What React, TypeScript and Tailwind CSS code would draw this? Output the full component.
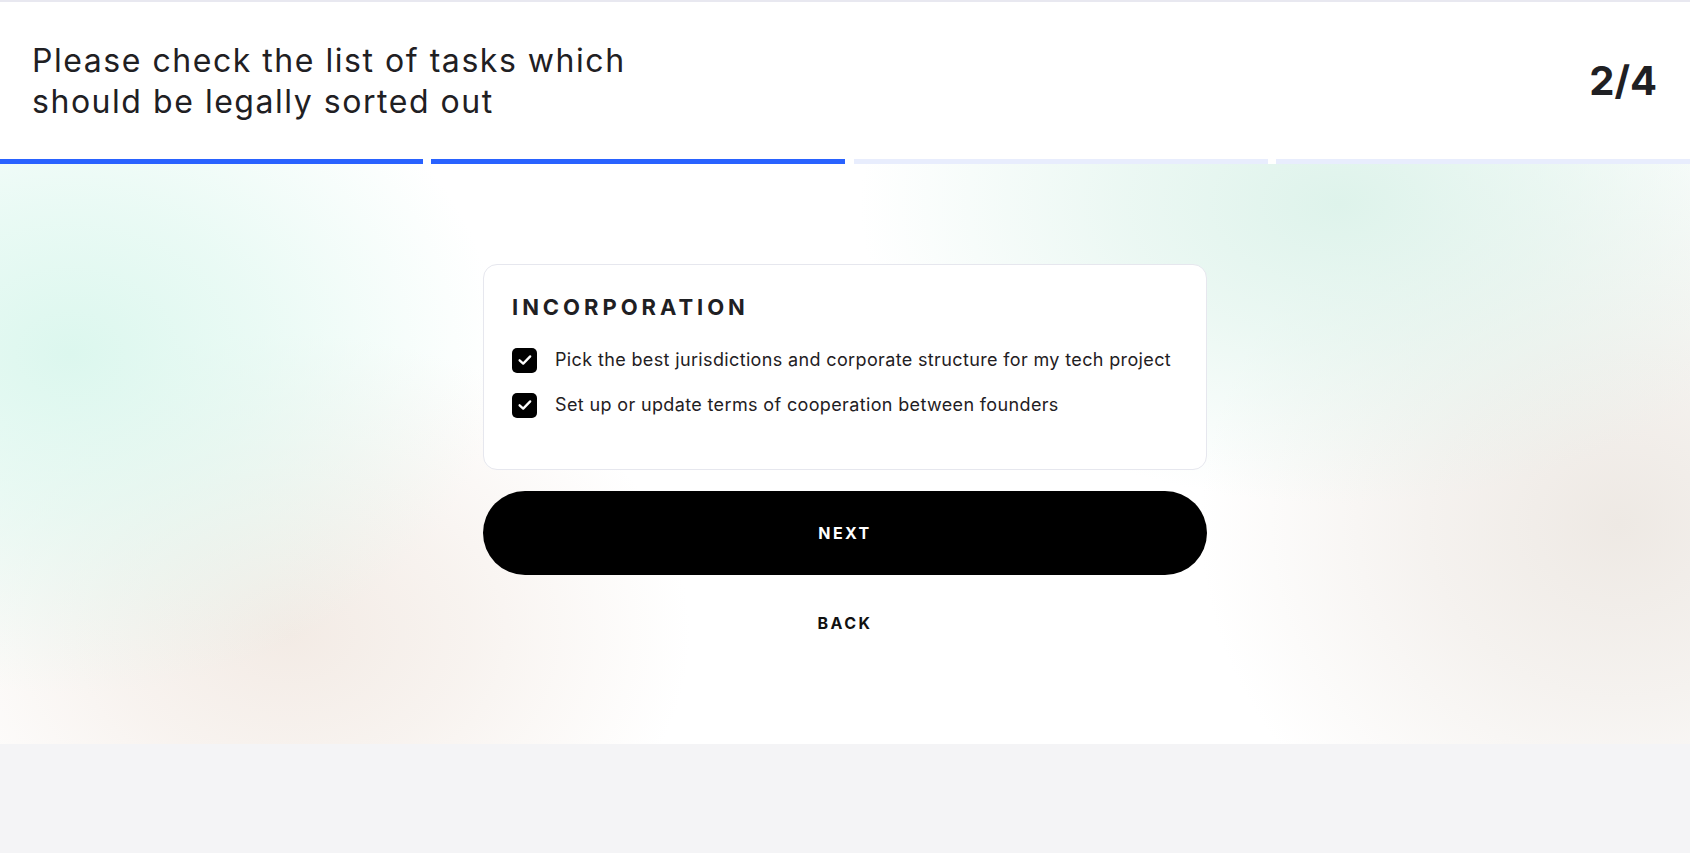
import React from "react";

function Check() {
  return (
    <span className="flex h-[25px] w-[25px] shrink-0 items-center justify-center rounded-[5px] bg-black">
      <svg width="16" height="16" viewBox="0 0 16 16" fill="none">
        <path d="M2.6 8.3 L6.2 11.6 L13.2 4.4" stroke="white" strokeWidth="2.3" strokeLinecap="round" strokeLinejoin="round" />
      </svg>
    </span>
  );
}

export default function App() {
  const items = [
    "Pick the best jurisdictions and corporate structure for my tech project",
    "Set up or update terms of cooperation between founders",
  ];
  return (
    <div className="min-h-[853px] bg-[#f4f4f6] font-['Inter',sans-serif] text-[#1f2023]">
      <div className="bg-white">
        <div className="h-[2px] bg-[#e8e8f0]" />
        <header className="flex h-[157px] items-center justify-between pl-8 pr-[33px]">
          <h1 className="max-w-[700px] text-[32px] leading-[41px] font-normal tracking-[0.048em] text-[#1f2023]">
            Please check the list of tasks which
            <br />
            should be legally sorted out
          </h1>
          <div className="text-[40px] leading-[48px] font-bold text-[#1f2023]">2/4</div>
        </header>
        <div className="grid h-[5px] grid-cols-4">
          <div>
            <div className="h-full bg-[#2962ff]" />
          </div>
          <div className="pl-2">
            <div className="h-full bg-[#2962ff]" />
          </div>
          <div className="pl-[9px]">
            <div className="h-full bg-[#e8edfd]" />
          </div>
          <div className="pl-2">
            <div className="h-full bg-[#e8edfd]" />
          </div>
        </div>
        <main className="flex h-[580px] flex-col items-center pt-[100px] bg-[image:radial-gradient(ellipse_430px_340px_at_70px_190px,rgba(220,247,238,1)_0%,rgba(220,247,238,0.6)_45%,rgba(220,247,238,0)_100%),radial-gradient(ellipse_400px_300px_at_290px_470px,rgba(243,235,229,1)_0%,rgba(243,235,229,0.6)_45%,rgba(243,235,229,0)_100%),radial-gradient(ellipse_480px_300px_at_1340px_40px,rgba(222,243,235,1)_0%,rgba(222,243,235,0.6)_45%,rgba(222,243,235,0)_100%),radial-gradient(ellipse_420px_380px_at_1620px_360px,rgba(238,233,228,1)_0%,rgba(238,233,228,0.6)_45%,rgba(238,233,228,0)_100%)]">
          <section className="w-[724px] rounded-[14px] border border-[#e6e7ee] bg-white px-7 pt-7 pb-[50px]">
            <h2 className="text-[22px] leading-[28px] font-bold tracking-[0.18em] text-[#1f2023]">
              INCORPORATION
            </h2>
            <ul className="mt-[25px] flex flex-col gap-[17px]">
              {items.map((t) => (
                <li key={t} className="flex items-center gap-[18px]">
                  <Check />
                  <span className="text-[18px] leading-[28px] tracking-[0.02em] text-[#1f2023]">{t}</span>
                </li>
              ))}
            </ul>
          </section>
          <button className="mt-[21px] flex h-[84px] w-[724px] items-center justify-center rounded-full bg-black text-[16px] font-bold tracking-[0.15em] text-white">
            NEXT
          </button>
          <button className="mt-[36px] text-[16px] leading-[24px] font-bold tracking-[0.15em] text-[#111]">
            BACK
          </button>
        </main>
      </div>
    </div>
  );
}
